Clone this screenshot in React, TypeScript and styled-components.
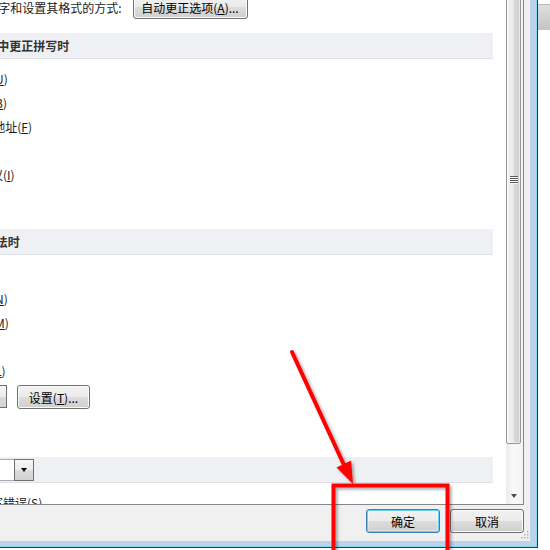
import styled, { createGlobalStyle } from 'styled-components';

const GlobalStyle = createGlobalStyle`
  html, body {
    margin: 0;
    padding: 0;
    background: #fff;
  }
  body {
    font-family: "Noto Sans CJK SC", "Noto Sans", sans-serif;
    font-size: 12px;
    color: #1e1e1e;
  }
`;

const Screen = styled.div`
  position: relative;
  width: 550px;
  height: 550px;
  overflow: hidden;
  display: flex;
  align-items: flex-start;
  background: #fff;
`;

// the dialog is larger than the crop: it starts above and left of the view
const Window = styled.div`
  flex: 0 0 auto;
  margin: -100px 0 0 -150px;
  width: 688px;
  height: 648px;
  box-sizing: border-box;
  padding: 0 7px 6px 0;
  background: #bcd3eb;
  border-right: 1px solid #2f3a46;
  border-bottom: 1px solid #2f3a46;
  box-shadow: inset -1px -1px 0 #86d8f6;
`;

const Client = styled.div`
  position: relative;
  height: 100%;
  box-sizing: border-box;
  display: flex;
  flex-direction: column;
  padding-right: 6px;
  background: #f0f0f0;
`;

const ScrollView = styled.div`
  display: flex;
  flex: 0 0 605px;
  height: 605px;
  min-height: 0;
  overflow: hidden;
  box-sizing: border-box;
  border-right: 1px solid #828790;
  border-bottom: 1px solid #828790;
  background: #fff;
`;

const Pane = styled.div`
  flex: 1;
  min-width: 0;
  overflow: hidden;
`;

const Content = styled.div`
  padding: 95px 13px 0 10px;
`;

const AutoCorrectRow = styled.div`
  display: flex;
  align-items: center;
  gap: 11px;
  height: 24px;
  padding-left: 43px;
`;

const Label = styled.span<{ $width?: number }>`
  flex: 0 0 ${({ $width }) => ($width ? `${$width}px` : 'auto')};
  white-space: nowrap;
  color: #1a1a1a;
`;

const SectionHeader = styled.div<{ $top: number }>`
  display: flex;
  align-items: center;
  gap: 6px;
  height: 26px;
  box-sizing: border-box;
  margin-top: ${({ $top }) => $top}px;
  padding-left: 3px;
  background: #eff0f3;
  border-bottom: 1px solid #e0e1e6;
  font-weight: bold;
  color: #333;
  white-space: nowrap;
`;

const OptionGroup = styled.div<{ $bottom: number }>`
  display: flex;
  flex-direction: column;
  padding: 7px 0 ${({ $bottom }) => $bottom}px;
`;

const OptionRow = styled.div`
  display: flex;
  align-items: center;
  gap: 5px;
  height: 24px;
  padding-left: 5px;
`;

const CheckBox = styled.span`
  flex: 0 0 13px;
  height: 13px;
  box-sizing: border-box;
  border: 1px solid #8e8f8f;
  background: linear-gradient(135deg, #dcdcdc, #fefefe);
  display: flex;
  align-items: center;
  justify-content: center;
`;

const ControlRow = styled.div<{ $top: number }>`
  display: flex;
  align-items: flex-start;
  gap: 8px;
  height: 24px;
  margin-top: ${({ $top }) => $top}px;
  padding-left: 5px;
`;

const Button = styled.button<{ $width: number; $default?: boolean; $gapBefore?: number }>`
  flex: 0 0 ${({ $width }) => $width}px;
  height: 24px;
  box-sizing: border-box;
  padding: 0;
  margin: 0 0 0 ${({ $gapBefore }) => $gapBefore || 0}px;
  display: inline-flex;
  align-items: center;
  justify-content: center;
  font-family: inherit;
  font-size: 12px;
  color: #000;
  white-space: nowrap;
  border: 1px solid ${({ $default }) => ($default ? '#3c7fb1' : '#707070')};
  border-radius: 3px;
  background: linear-gradient(#f2f2f2 0%, #ebebeb 50%, #dddddd 50%, #cfcfcf 100%);
  box-shadow: ${({ $default }) =>
    $default ? 'inset 0 0 0 1px #5fd0f6, inset 0 0 0 2px rgba(255,255,255,0.35)' : 'inset 0 0 0 1px #fbfbfb'};
`;

const Combo = styled.div<{ $width: number; $height: number }>`
  flex: 0 0 ${({ $width }) => $width}px;
  height: ${({ $height }) => $height}px;
  display: flex;
  font-weight: normal;
`;

const ComboField = styled.div`
  flex: 1;
  display: flex;
  align-items: center;
  padding-left: 4px;
  background: #fff;
  border: 1px solid #a5acb5;
  border-right: none;
  overflow: hidden;
  white-space: nowrap;
`;

const ComboButton = styled.div`
  flex: 0 0 20px;
  box-sizing: border-box;
  display: flex;
  align-items: center;
  justify-content: center;
  border: 1px solid #707070;
  background: linear-gradient(#f6f6f6 0%, #ececec 50%, #dcdcdc 50%, #d2d2d2 100%);
`;

const DownTriangle = styled.span<{ $color?: string }>`
  width: 0;
  height: 0;
  border-left: 3.5px solid transparent;
  border-right: 3.5px solid transparent;
  border-top: 4px solid ${({ $color }) => $color || '#000'};
`;

const UpTriangle = styled.span`
  width: 0;
  height: 0;
  border-left: 3px solid transparent;
  border-right: 3px solid transparent;
  border-bottom: 3px solid #4d4d4d;
`;

const ScrollBar = styled.div`
  flex: 0 0 17px;
  display: flex;
  flex-direction: column;
  background: linear-gradient(to right, #ececec, #f9f9f9 45%, #f3f3f3);
`;

const ArrowButton = styled.div`
  flex: 0 0 16px;
  display: flex;
  align-items: center;
  justify-content: center;
  padding-right: 1px;
`;

const Thumb = styled.div`
  flex: 0 0 528px;
  width: 15px;
  box-sizing: border-box;
  border: 1px solid #979797;
  border-radius: 2px;
  background: linear-gradient(to right, #f5f5f5 0%, #e9e9e9 50%, #d9d9d9 52%, #cdcdcd 100%);
  box-shadow: inset 0 0 0 1px rgba(255, 255, 255, 0.6);
  display: flex;
  align-items: center;
  justify-content: center;
`;

const ThumbGrip = styled.span`
  width: 8px;
  height: 8px;
  background: repeating-linear-gradient(#5c5c5c 0 1px, #f4f4f4 1px 2px);
`;

const Track = styled.div`
  flex: 1;
`;

const Footer = styled.div`
  flex: 1;
  display: flex;
  justify-content: flex-end;
  gap: 10px;
  padding-top: 4px;
`;

const SizeGrip = styled.svg`
  position: absolute;
  right: 1px;
  bottom: 2px;
`;

const OutsideStrip = styled.div`
  flex: 0 0 12px;
  height: 550px;
  background: #fff;
`;

const OtherWindowEdge = styled.div`
  margin-top: 4px;
  height: 25px;
  background: linear-gradient(#dedede, #c4c4c4);
  border-top: 1px solid #b8b8b8;
`;

const Annotation = styled.svg`
  position: absolute;
  left: 0;
  top: 0;
  pointer-events: none;
`;

type Option = { text: string; key: string; checked?: boolean };

const OFFICE_OPTIONS: Option[] = [
  { text: '忽略全部大写的单词', key: 'U', checked: true },
  { text: '忽略包含数字的单词', key: 'B', checked: true },
  { text: '忽略 Internet 和文件地址', key: 'F', checked: true },
  { text: '标记重复单词', key: 'R', checked: true },
  { text: '仅根据主词典提供建议', key: 'I' },
];

const WORD_OPTIONS: Option[] = [
  { text: '键入时检查拼写', key: 'P', checked: true },
  { text: '使用上下文拼写检查', key: 'N', checked: true },
  { text: '键入时标记语法错误', key: 'M', checked: true },
  { text: '随拼写检查语法', key: 'H', checked: true },
  { text: '显示可读性统计信息', key: 'L' },
];

const EXCEPTION_OPTIONS: Option[] = [
  { text: '只隐藏此文档中的拼写错误', key: 'S' },
  { text: '只隐藏此文档中的语法错误', key: 'D' },
];

const GRIP_DOTS = [
  [7, 1],
  [7, 4],
  [4, 4],
  [7, 7],
  [4, 7],
  [1, 7],
];

const Check = () => (
  <svg width="9" height="9" viewBox="0 0 9 9">
    <path d="M1 4.5 L3.5 7 L8 1.5" fill="none" stroke="#2a3a5a" strokeWidth="1.6" />
  </svg>
);

const Options = ({ items }: { items: Option[] }) => (
  <>
    {items.map(({ text, key, checked }) => (
      <OptionRow key={key}>
        <CheckBox>{checked && <Check />}</CheckBox>
        <Label>
          {text}(<u>{key}</u>)
        </Label>
      </OptionRow>
    ))}
  </>
);

export default function App() {
  return (
    <>
      <GlobalStyle />
      <Screen>
        <Window>
          <Client>
            <ScrollView>
              <Pane>
                <Content>
                  <AutoCorrectRow>
                    <Label>更改 Word 更正文字和设置其格式的方式:</Label>
                    <Button $width={115}>
                      自动更正选项(<u>A</u>)...
                    </Button>
                  </AutoCorrectRow>

                  <SectionHeader $top={14}>在 Microsoft Office 程序中更正拼写时</SectionHeader>
                  <OptionGroup $bottom={15}>
                    <Options items={OFFICE_OPTIONS} />
                    <ControlRow $top={4}>
                      <Button $width={100}>
                        自定义词典(<u>C</u>)...
                      </Button>
                    </ControlRow>
                  </OptionGroup>

                  <SectionHeader $top={0}>在 Word 中更正拼写和语法时</SectionHeader>
                  <OptionGroup $bottom={18}>
                    <Options items={WORD_OPTIONS} />
                    <ControlRow $top={3}>
                      <Label $width={72}>
                        写作风格(<u>W</u>):
                      </Label>
                      <Combo $width={62} $height={23}>
                        <ComboField>仅语法</ComboField>
                        <ComboButton>
                          <DownTriangle />
                        </ComboButton>
                      </Combo>
                      <Button $width={73} $gapBefore={2}>
                        设置(<u>T</u>)...
                      </Button>
                    </ControlRow>
                    <ControlRow $top={6}>
                      <Button $width={96}>
                        检查文档(<u>K</u>)
                      </Button>
                    </ControlRow>
                  </OptionGroup>

                  <SectionHeader $top={0}>
                    <Label $width={60}>
                      例外项(<u>X</u>):
                    </Label>
                    <Combo $width={105} $height={22}>
                      <ComboField>文档1</ComboField>
                      <ComboButton>
                        <DownTriangle />
                      </ComboButton>
                    </Combo>
                  </SectionHeader>
                  <OptionGroup $bottom={10}>
                    <Options items={EXCEPTION_OPTIONS} />
                  </OptionGroup>
                </Content>
              </Pane>
              <ScrollBar>
                <ArrowButton>
                  <UpTriangle />
                </ArrowButton>
                <Thumb>
                  <ThumbGrip />
                </Thumb>
                <Track />
                <ArrowButton>
                  <DownTriangle $color="#4d4d4d" />
                </ArrowButton>
              </ScrollBar>
            </ScrollView>
            <Footer>
              <Button $width={74} $default>
                确定
              </Button>
              <Button $width={74}>取消</Button>
            </Footer>
            <SizeGrip width="9" height="9" viewBox="0 0 9 9">
              {GRIP_DOTS.map(([x, y]) => (
                <g key={`${x}-${y}`}>
                  <rect x={x + 0.5} y={y + 0.5} width="1.5" height="1.5" fill="#fff" />
                  <rect x={x} y={y} width="1.5" height="1.5" fill="#a8a8a8" />
                </g>
              ))}
            </SizeGrip>
          </Client>
        </Window>
        <OutsideStrip>
          <OtherWindowEdge />
        </OutsideStrip>

        <Annotation width="550" height="550" viewBox="0 0 550 550">
          <defs>
            <filter id="markShadow" x="-20%" y="-20%" width="140%" height="140%">
              <feDropShadow dx="2" dy="2" stdDeviation="1.5" floodColor="#000" floodOpacity="0.35" />
            </filter>
          </defs>
          <g filter="url(#markShadow)">
            <rect x="333.5" y="485.5" width="114" height="100" fill="none" stroke="#ff0000" strokeWidth="4" />
            <line x1="292" y1="352" x2="344" y2="465" stroke="#ff0000" strokeWidth="4" strokeLinecap="round" />
            <polygon points="353,484 336.5,467.4 351.1,460.6" fill="#ff0000" />
          </g>
        </Annotation>
      </Screen>
    </>
  );
}
